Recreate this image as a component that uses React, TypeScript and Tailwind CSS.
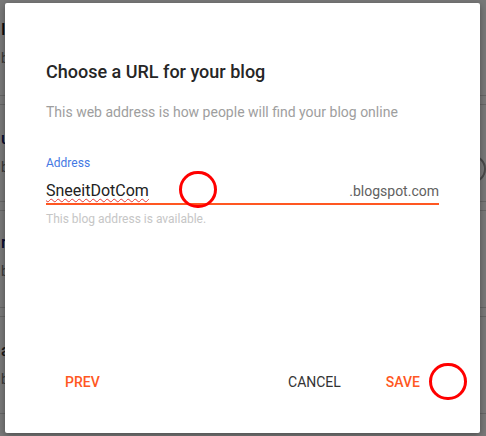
const rows = [
  { title: "I", sub: "b", top: "pt-[20px]", titleColor: "text-[#111]", ring: false },
  { title: "u", sub: "b", top: "pt-[24px]", titleColor: "text-[#0d1a66]", ring: true },
  { title: "r", sub: "b", top: "pt-[22px]", titleColor: "text-[#0d1a66]", ring: false },
  { title: "a", sub: "b", top: "pt-[24px]", titleColor: "text-[#333]", ring: false },
];

function PageBehind() {
  return (
    <div className="flex flex-col gap-[8px]">
      {rows.map((r, i) => (
        <div
          key={i}
          className={`relative border-[#d6d6d6] ${i === 0 ? "border-b h-[96px]" : "border-y h-[98px]"} ${r.top}`}
        >
          <div className="w-[5px] overflow-hidden pl-[1px]">
            <div className={`text-[16px] leading-5 font-medium ${r.titleColor}`}>{r.title}</div>
            <div className="mt-[8px] text-[14px] leading-5 text-[#777]">{r.sub}</div>
          </div>
          {r.ring && (
            <div className="absolute left-[458px] top-[50px] w-[28px] h-[28px] rounded-full border-2 border-[#999]" />
          )}
        </div>
      ))}
    </div>
  );
}

export default function App() {
  return (
    <div className="relative w-[486px] h-[436px] overflow-hidden bg-white font-[Roboto,Arial,sans-serif]">
      <PageBehind />

      {/* scrim */}
      <div className="absolute inset-0 bg-black/[0.53]" />

      {/* dialog */}
      <div className="absolute left-[5px] top-[3px] w-[475px] h-[430px] flex flex-col bg-white rounded-[2px] shadow-[0_2px_6px_rgba(0,0,0,0.35)]">
        <div className="px-[41px] pt-[57px]">
          <h2 className="text-[18px] leading-6 font-medium text-[#262626]">
            Choose a URL for your blog
          </h2>
          <p className="mt-[18px] text-[14px] leading-5 text-[#9e9e9e]">
            This web address is how people will find your blog online
          </p>

          <label className="block mt-[33px] text-[12px] leading-4 text-[#4478e3]">
            Address
          </label>
          <div className="mt-[8px] flex items-baseline justify-between border-b-2 border-[#ff5722]">
            <span className="text-[16px] leading-6 text-[#212121] underline decoration-wavy decoration-[#e53935] decoration-1 underline-offset-[2px]">
              SneeitDotCom
            </span>
            <span className="text-[14px] leading-6 text-[#616161]">.blogspot.com</span>
          </div>
          <p className="mt-[6px] text-[12px] leading-4 text-[#c6c6c6]">
            This blog address is available.
          </p>
        </div>

        <div className="mt-auto flex items-center px-[60px] pb-[41px]">
          <button type="button" className="text-[14px] leading-5 font-medium text-[#ff5722]">
            PREV
          </button>
          <div className="ml-auto flex items-center gap-[45px]">
            <button type="button" className="text-[14px] leading-5 font-normal text-[#333]">
              CANCEL
            </button>
            <button type="button" className="text-[14px] leading-5 font-medium text-[#ff5722]">
              SAVE
            </button>
          </div>
        </div>
      </div>

      {/* annotation circles */}
      <div className="absolute left-[179px] top-[171px] w-[38px] h-[37px] rounded-full border-[3px] border-[#f00]" />
      <div className="absolute left-[429px] top-[363px] w-[38px] h-[37px] rounded-full border-[3px] border-[#f00]" />
    </div>
  );
}
